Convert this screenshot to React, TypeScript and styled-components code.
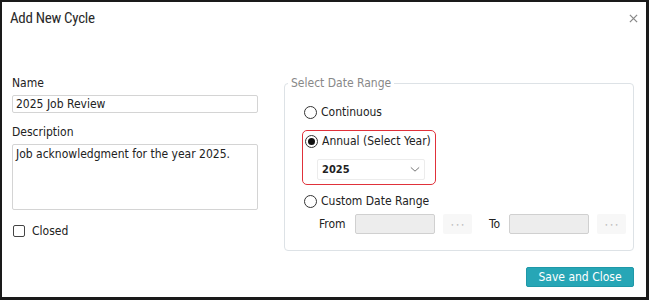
import React from 'react';
import styled, { createGlobalStyle } from 'styled-components';

const GlobalStyle = createGlobalStyle`
  html, body {
    margin: 0;
    padding: 0;
    background: #fff;
  }
  body {
    font-family: 'DejaVu Sans', Verdana, sans-serif;
    font-stretch: semi-condensed;
    color: #222;
  }
`;

const App = () => {
  return (
    <>
      <GlobalStyle />
      <Dialog>
        <Header>
          <Title>Add New Cycle</Title>
          <CloseIcon viewBox="0 0 10 10">
            <path d="M1 1 L9 9 M9 1 L1 9" />
          </CloseIcon>
        </Header>
        <Body>
          <LeftColumn>
            <Label>Name</Label>
            <TextInput defaultValue="2025 Job Review" />
            <Label>Description</Label>
            <TextArea defaultValue="Job acknowledgment for the year 2025." />
            <CheckRow>
              <CheckBox />
              <span>Closed</span>
            </CheckRow>
          </LeftColumn>
          <RangeSet>
            <Legend>Select Date Range</Legend>
            <RangeBody>
              <RadioRow>
                <Radio />
                <span>Continuous</span>
              </RadioRow>
              <Highlight>
                <RadioRow>
                  <Radio $checked />
                  <span>Annual (Select Year)</span>
                </RadioRow>
                <YearSelect>
                  <span>2025</span>
                  <Chevron viewBox="0 0 12 8">
                    <path d="M1 1.5 L6 6 L11 1.5" />
                  </Chevron>
                </YearSelect>
              </Highlight>
              <RadioRow>
                <Radio />
                <span>Custom Date Range</span>
              </RadioRow>
              <DateRow>
                <DateLabel $width={36}>From</DateLabel>
                <DateInput />
                <DotsButton>•••</DotsButton>
                <DateLabel $width={20}>To</DateLabel>
                <DateInput />
                <DotsButton>•••</DotsButton>
              </DateRow>
            </RangeBody>
          </RangeSet>
        </Body>
        <Footer>
          <SaveButton>Save and Close</SaveButton>
        </Footer>
      </Dialog>
    </>
  );
};

const Dialog = styled.div`
  width: 649px;
  height: 300px;
  box-sizing: border-box;
  border: 2px solid #1a1a1a;
  border-right-width: 3px;
  border-bottom-width: 3px;
  display: flex;
  flex-direction: column;
  padding: 0 12px 0 8px;
  background: #fff;
`;

const Header = styled.div`
  display: flex;
  justify-content: space-between;
  align-items: center;
  height: 32px;
`;

const Title = styled.div`
  font-family: Roboto, 'Noto Sans', sans-serif;
  font-size: 15px;
  font-weight: 400;
  letter-spacing: -0.3px;
  color: #2a2a2a;
`;

const CloseIcon = styled.svg`
  width: 9px;
  height: 9px;
  margin-right: -4px;
  path {
    stroke: #888;
    stroke-width: 1.4;
    fill: none;
  }
`;

const Body = styled.div`
  display: flex;
  align-items: flex-start;
  gap: 26px;
  margin-top: 42px;
  padding-left: 2px;
`;

const LeftColumn = styled.div`
  width: 246px;
  display: flex;
  flex-direction: column;
`;

const Label = styled.div`
  font-size: 12px;
  line-height: 14px;
  color: #222;
  margin-bottom: 5px;
`;

const TextInput = styled.input`
  box-sizing: border-box;
  width: 246px;
  height: 18px;
  border: 1px solid #d4d4d4;
  border-radius: 2px;
  padding: 0 3px;
  font: inherit;
  font-size: 12px;
  color: #222;
  margin-bottom: 12px;
  outline: none;
`;

const TextArea = styled.textarea`
  box-sizing: border-box;
  width: 246px;
  height: 66px;
  border: 1px solid #d4d4d4;
  border-radius: 2px;
  padding: 2px 3px;
  font: inherit;
  font-size: 12px;
  color: #222;
  resize: none;
  overflow-y: scroll;
  margin: 0;
  outline: none;
  &::-webkit-scrollbar {
    width: 7px;
    background: #f0f0f0;
  }
`;

const CheckRow = styled.label`
  display: flex;
  align-items: center;
  gap: 7px;
  font-size: 12px;
  margin-top: 14px;
  margin-left: 1px;
`;

const CheckBox = styled.span`
  box-sizing: border-box;
  width: 12px;
  height: 12px;
  border: 1.5px solid #444;
  border-radius: 2px;
`;

const RangeSet = styled.fieldset`
  box-sizing: border-box;
  width: 350px;
  height: 175px;
  margin: 0;
  padding: 0;
  border: 1px solid #dde2e6;
  border-radius: 4px;
  min-width: 0;
`;

const Legend = styled.legend`
  font-size: 12px;
  color: #888;
  padding: 0 3px;
  margin-left: 3px;
`;

const RangeBody = styled.div`
  padding: 14px 0 0 19px;
  display: flex;
  flex-direction: column;
  align-items: flex-start;
`;

const RadioRow = styled.label`
  display: flex;
  align-items: center;
  gap: 4px;
  font-size: 12px;
  height: 16px;
  color: #222;
`;

const Radio = styled.span<{ $checked?: boolean }>`
  box-sizing: border-box;
  width: 13px;
  height: 13px;
  border: 1.5px solid #333;
  border-radius: 50%;
  display: flex;
  align-items: center;
  justify-content: center;
  &::after {
    content: '';
    display: ${(p) => (p.$checked ? 'block' : 'none')};
    width: 7px;
    height: 7px;
    border-radius: 50%;
    background: #111;
  }
`;

const Highlight = styled.div`
  box-sizing: border-box;
  width: 134px;
  height: 55px;
  margin: 10px 0 8px -2px;
  padding: 2px 0 0 2px;
  border: 1.5px solid #e0313a;
  border-radius: 5px;
  display: flex;
  flex-direction: column;
`;

const YearSelect = styled.div`
  box-sizing: border-box;
  width: 108px;
  height: 21px;
  margin: 10px 0 0 12px;
  border: 1px solid #ececec;
  border-radius: 2px;
  display: flex;
  align-items: center;
  justify-content: space-between;
  padding: 0 4px 0 4px;
  font-size: 11px;
  font-weight: bold;
  color: #222;
`;

const Chevron = styled.svg`
  width: 10px;
  height: 7px;
  path {
    stroke: #777;
    stroke-width: 1.2;
    fill: none;
  }
`;

const DateRow = styled.div`
  display: flex;
  align-items: center;
  margin-top: 5px;
  margin-left: 15px;
  font-size: 12px;
`;

const DateLabel = styled.span<{ $width: number }>`
  width: ${(p) => p.$width}px;
  flex-shrink: 0;
`;

const DateInput = styled.div`
  box-sizing: border-box;
  width: 80px;
  height: 20px;
  flex-shrink: 0;
  background: #ededed;
  border: 1px solid #d0d0d0;
  border-radius: 2px;
`;

const DotsButton = styled.div`
  box-sizing: border-box;
  width: 29px;
  height: 20px;
  flex-shrink: 0;
  margin: 0 17px 0 8px;
  background: #f7f7f7;
  border-radius: 2px;
  display: flex;
  align-items: center;
  justify-content: center;
  font-size: 6px;
  letter-spacing: 2px;
  padding-left: 2px;
  color: #bdbdbd;
  &:last-child {
    margin-right: 0;
  }
`;

const Footer = styled.div`
  display: flex;
  justify-content: flex-end;
  margin-top: 16px;
`;

const SaveButton = styled.button`
  box-sizing: border-box;
  width: 108px;
  height: 20px;
  background: #27a6b6;
  border: 1px solid #1f98a8;
  border-radius: 2px;
  color: #fff;
  font-family: 'DejaVu Sans', Verdana, sans-serif;
  font-stretch: semi-condensed;
  font-size: 12px;
  padding: 0;
`;

export default App;
